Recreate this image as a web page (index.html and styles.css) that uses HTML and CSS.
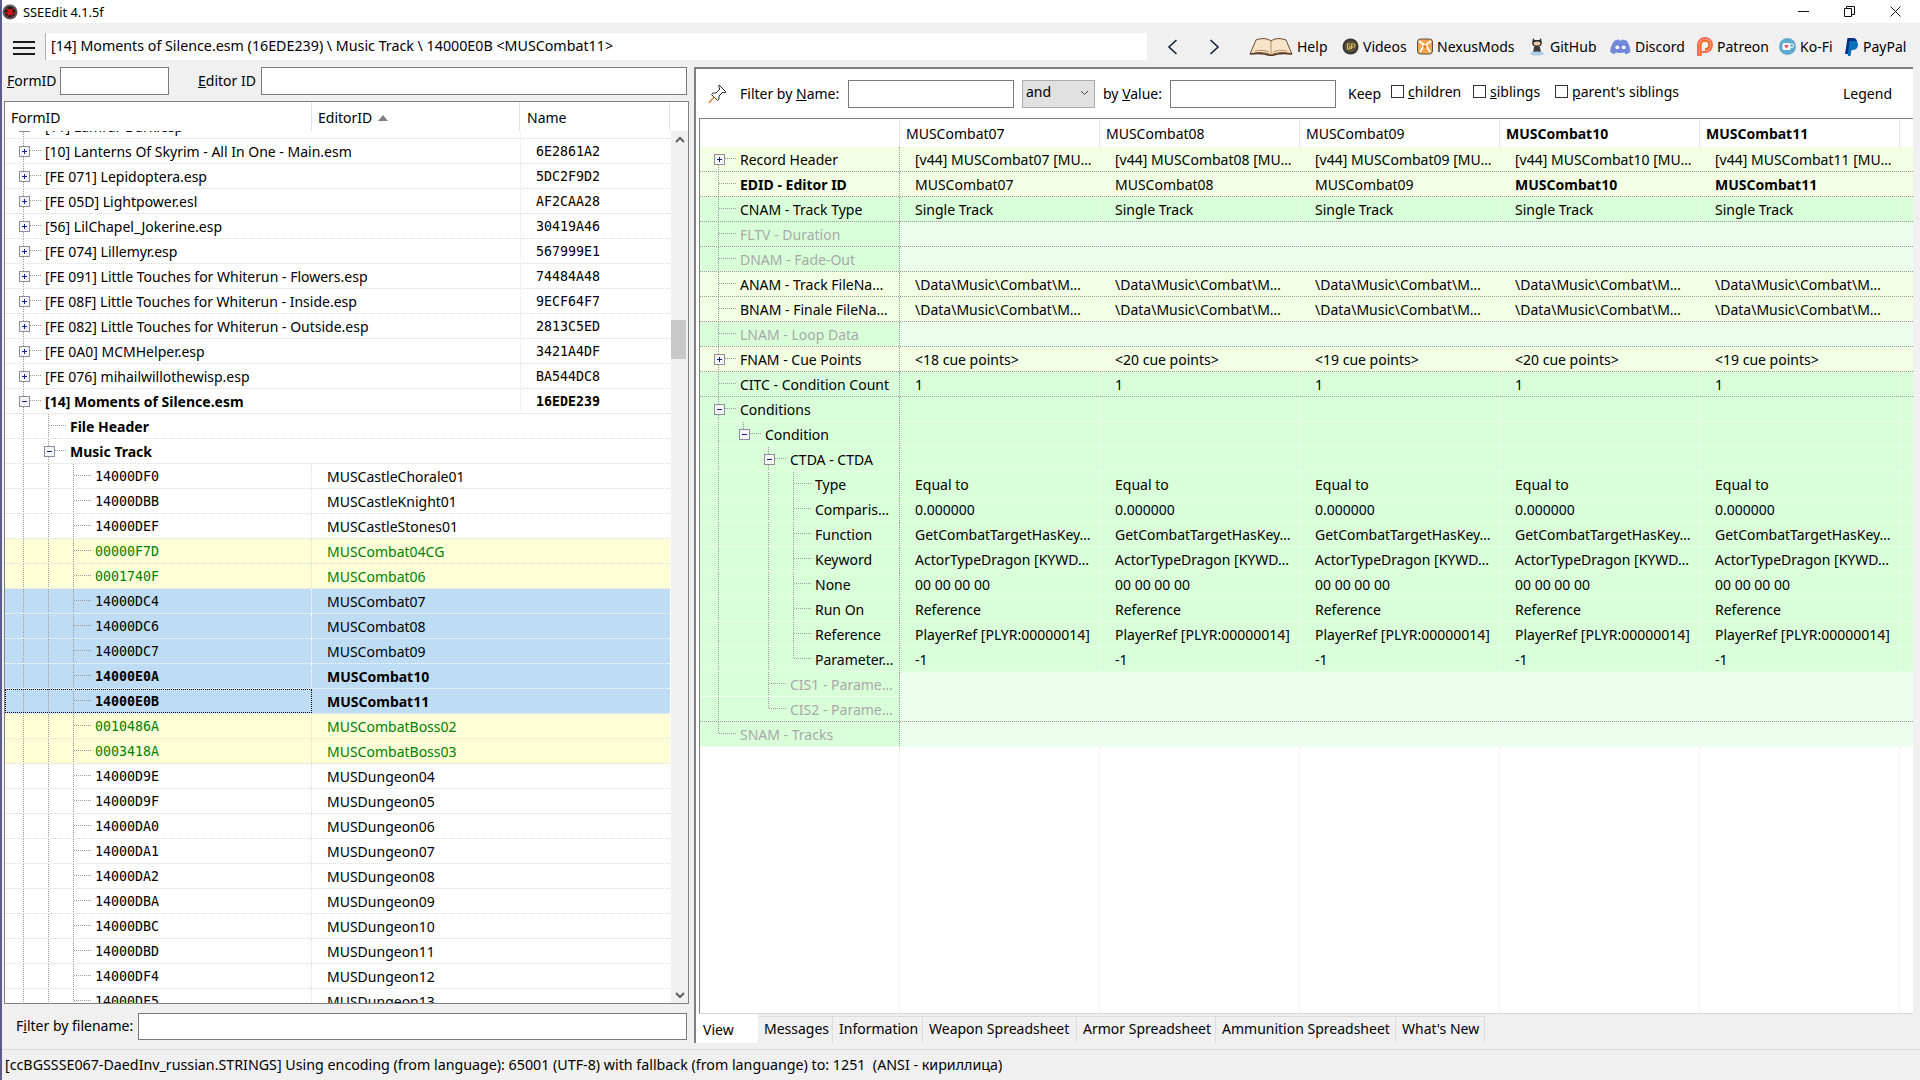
FILE: index.html
```html
<!DOCTYPE html>
<html lang="en">
<head>
<meta charset="utf-8">
<title>SSEEdit 4.1.5f</title>
<link rel="stylesheet" href="styles.css">
</head>
<body>
<div class="app">
  <header class="titlebar">
    <svg class="appicon" viewBox="0 0 16 16" width="16" height="16"><circle cx="8" cy="8" r="7.5" fill="#5c5c5c"/><circle cx="8" cy="8" r="5.5" fill="#1c1c1c"/><path d="M4 4l3 3M12 4L9 7M3 9h3M13 9h-3M5 13l2-3M11 13L9 10" stroke="#d01818" stroke-width="1.3"/><ellipse cx="8" cy="8" rx="2.4" ry="3" fill="#d01818"/></svg>
    <span class="apptitle">SSEEdit 4.1.5f</span>
    <div class="winbtns">
      <svg width="11" height="11" viewBox="0 0 11 11"><path d="M0 5.5h11" stroke="#111"/></svg>
      <svg width="11" height="11" viewBox="0 0 11 11"><path d="M.5 2.5h7v8h-7zM2.5 2.5v-2h8v8h-3" fill="none" stroke="#111"/></svg>
      <svg width="11" height="11" viewBox="0 0 11 11"><path d="M.5.5l10 10M10.5.5l-10 10" stroke="#111"/></svg>
    </div>
  </header>

  <nav class="toolbar">
    <div class="burger"><i></i><i></i><i></i></div>
    <div class="address">[14] Moments of Silence.esm (16EDE239) \ Music Track \ 14000E0B &lt;MUSCombat11&gt;</div>
    <svg class="chev first" width="11" height="16" viewBox="0 0 11 16"><path d="M9.5 1L2 8l7.5 7" fill="none" stroke="#14233c" stroke-width="1.6"/></svg>
    <svg class="chev" width="11" height="16" viewBox="0 0 11 16"><path d="M1.5 1L9 8l-7.5 7" fill="none" stroke="#14233c" stroke-width="1.6"/></svg>
    <div class="links">
      <a class="link book"><svg width="44" height="19" viewBox="0 0 44 19"><path d="M1 17L7 3c5-2 11-2 15 1 4-3 10-3 15-1l6 14c-7-2-15-2-21 1-6-3-14-3-21-1z" fill="#f6e3c8" stroke="#6b4a2c"/><path d="M22 4v13M6 14c5-1 10-1 14 1M38 14c-5-1-10-1-14 1" stroke="#b98d62" fill="none"/><path d="M1 17c7-1 15-1 21 2 6-3 14-3 21-2" stroke="#5a3a20" stroke-width="1.5" fill="none"/></svg>Help</a>
      <a class="link"><svg width="17" height="17" viewBox="0 0 17 17"><circle cx="8.5" cy="8.5" r="8" fill="#3a3530"/><circle cx="8.5" cy="8.5" r="6" fill="#57503f"/><path d="M8 6H5.5v5H8V8.7H6.7M9.5 11V6h2a1.4 1.4 0 010 3h-2" fill="none" stroke="#d9b45a" stroke-width="1.2"/></svg>Videos</a>
      <a class="link"><svg width="16" height="17" viewBox="0 0 16 17"><rect x=".5" y="1" width="15" height="15" rx="3" fill="#f6a34a" stroke="#5b5048"/><path d="M2 3l5 4-1 2-3 5M14 3L9 7l1 2 3 5" stroke="#fff" stroke-width="2" fill="none"/><circle cx="8" cy="8.5" r="1.6" fill="#e27a1f"/></svg>NexusMods</a>
      <a class="link"><svg width="18" height="19" viewBox="0 0 18 19"><path d="M5 1l1.5 2h5L13 1l.7 4c.6 2.800-1.200 5-4.700 5S3.700 7.800 4.300 5z" fill="#2b2b2b"/><ellipse cx="9" cy="6.500" rx="3.400" ry="2" fill="#e9c9a8"/><path d="M6 10h6l.8 5H5.200z" fill="#3c3c3c"/><ellipse cx="9" cy="16.500" rx="7" ry="2" fill="#a9cfe6"/></svg>GitHub</a>
      <a class="link"><svg width="21" height="16" viewBox="0 0 21 16"><path d="M4 2c2-1 4-1.500 5-1.500l.5 1h2l.5-1c1 0 3 .5 5 1.500 2 3 3.500 7 3.300 11-1.500 1.200-3.300 2-4.800 2.300l-1-1.800-4.500.5-4.500-.5-1 1.800C3.500 15 1.700 14.200.2 13 0 9 2 5 4 2z" fill="#7289da"/><circle cx="7.300" cy="8.300" r="1.900" fill="#fff"/><circle cx="13.700" cy="8.300" r="1.900" fill="#fff"/></svg>Discord</a>
      <a class="link"><svg width="16" height="20" viewBox="0 0 16 20"><path d="M1 19V8a7 7 0 117 7H5" fill="none" stroke="#f96854" stroke-width="2"/><path d="M3.500 19V8a4.500 4.500 0 114.500 4.500" fill="none" stroke="#f26b21" stroke-width="2.400"/></svg>Patreon</a>
      <a class="link"><svg width="17" height="17" viewBox="0 0 17 17"><circle cx="8.500" cy="8.500" r="8.500" fill="#5fa9cf"/><rect x="3.500" y="5" width="8" height="7" rx="1.500" fill="#fff"/><path d="M11.500 6h1.500a1.500 1.500 0 010 3.500h-1.500" fill="none" stroke="#fff"/><path d="M7.500 10.500L5.500 8.300a1.100 1.100 0 012-1 1.100 1.100 0 012 1z" fill="#e5566b"/></svg>Ko-Fi</a>
      <a class="link"><svg width="14" height="18" viewBox="0 0 14 18"><path d="M2.500 0h5c3.500 0 5 2 4.300 5C11 8.500 9 10 6 10H4.500l-1 6H0z" fill="#003087"/><path d="M4.500 3h4.500c3 0 4.500 1.500 4 4.500-.6 3-2.500 4.500-5.500 4.500H6.500l-1 6H2.800z" fill="#0a70ba"/></svg>PayPal</a>
    </div>
  </nav>

  <main class="main">
    <section class="left">
      <div class="searchbar">
        <label class="lb-form"><u>F</u>ormID</label><input class="in in-form">
        <label class="lb-ed"><u>E</u>ditor ID</label><input class="in in-ed">
      </div>
      <div class="treebox">
        <div class="thead">
          <span class="th th1">FormID</span>
          <span class="th th2">EditorID<i class="sort"></i></span>
          <span class="th th3">Name</span>
        </div>
        <div class="tbody">
          <div class="tlist">
            <div class="tinner">
              <div class="row"><span class="cf"><i class="x p"></i>[11] Lamrar Dark.esp</span><span class="cn"></span></div>
              <div class="row"><span class="cf"><i class="x p"></i>[10] Lanterns Of Skyrim - All In One - Main.esm</span><span class="cn">6E2861A2</span></div>
              <div class="row"><span class="cf"><i class="x p"></i>[FE 071] Lepidoptera.esp</span><span class="cn">5DC2F9D2</span></div>
              <div class="row"><span class="cf"><i class="x p"></i>[FE 05D] Lightpower.esl</span><span class="cn">AF2CAA28</span></div>
              <div class="row"><span class="cf"><i class="x p"></i>[56] LilChapel_Jokerine.esp</span><span class="cn">30419A46</span></div>
              <div class="row"><span class="cf"><i class="x p"></i>[FE 074] Lillemyr.esp</span><span class="cn">567999E1</span></div>
              <div class="row"><span class="cf"><i class="x p"></i>[FE 091] Little Touches for Whiterun - Flowers.esp</span><span class="cn">74484A48</span></div>
              <div class="row"><span class="cf"><i class="x p"></i>[FE 08F] Little Touches for Whiterun - Inside.esp</span><span class="cn">9ECF64F7</span></div>
              <div class="row"><span class="cf"><i class="x p"></i>[FE 082] Little Touches for Whiterun - Outside.esp</span><span class="cn">2813C5ED</span></div>
              <div class="row"><span class="cf"><i class="x p"></i>[FE 0A0] MCMHelper.esp</span><span class="cn">3421A4DF</span></div>
              <div class="row"><span class="cf"><i class="x p"></i>[FE 076] mihailwillothewisp.esp</span><span class="cn">BA544DC8</span></div>
              <div class="row bold"><span class="cf"><i class="x m"></i>[14] Moments of Silence.esm</span><span class="cn">16EDE239</span></div>
              <div class="row bold"><span class="cf noline"><i class="g"></i><i class="e"></i>File Header</span></div>
              <div class="row bold"><span class="cf noline"><i class="g"></i><i class="x m"></i>Music Track</span></div>
              <div class="row"><span class="cid"><i class="g"></i><i class="g"></i><i class="e"></i>14000DF0</span><span class="ced">MUSCastleChorale01</span></div>
              <div class="row"><span class="cid"><i class="g"></i><i class="g"></i><i class="e"></i>14000DBB</span><span class="ced">MUSCastleKnight01</span></div>
              <div class="row"><span class="cid"><i class="g"></i><i class="g"></i><i class="e"></i>14000DEF</span><span class="ced">MUSCastleStones01</span></div>
              <div class="row ovr"><span class="cid"><i class="g"></i><i class="g"></i><i class="e"></i>00000F7D</span><span class="ced">MUSCombat04CG</span></div>
              <div class="row ovr"><span class="cid"><i class="g"></i><i class="g"></i><i class="e"></i>0001740F</span><span class="ced">MUSCombat06</span></div>
              <div class="row sel"><span class="cid"><i class="g"></i><i class="g"></i><i class="e"></i>14000DC4</span><span class="ced">MUSCombat07</span></div>
              <div class="row sel"><span class="cid"><i class="g"></i><i class="g"></i><i class="e"></i>14000DC6</span><span class="ced">MUSCombat08</span></div>
              <div class="row sel"><span class="cid"><i class="g"></i><i class="g"></i><i class="e"></i>14000DC7</span><span class="ced">MUSCombat09</span></div>
              <div class="row sel bold"><span class="cid"><i class="g"></i><i class="g"></i><i class="e"></i>14000E0A</span><span class="ced">MUSCombat10</span></div>
              <div class="row sel bold focus"><span class="cid"><i class="g"></i><i class="g"></i><i class="e"></i>14000E0B</span><span class="ced">MUSCombat11</span></div>
              <div class="row ovr"><span class="cid"><i class="g"></i><i class="g"></i><i class="e"></i>0010486A</span><span class="ced">MUSCombatBoss02</span></div>
              <div class="row ovr"><span class="cid"><i class="g"></i><i class="g"></i><i class="e"></i>0003418A</span><span class="ced">MUSCombatBoss03</span></div>
              <div class="row"><span class="cid"><i class="g"></i><i class="g"></i><i class="e"></i>14000D9E</span><span class="ced">MUSDungeon04</span></div>
              <div class="row"><span class="cid"><i class="g"></i><i class="g"></i><i class="e"></i>14000D9F</span><span class="ced">MUSDungeon05</span></div>
              <div class="row"><span class="cid"><i class="g"></i><i class="g"></i><i class="e"></i>14000DA0</span><span class="ced">MUSDungeon06</span></div>
              <div class="row"><span class="cid"><i class="g"></i><i class="g"></i><i class="e"></i>14000DA1</span><span class="ced">MUSDungeon07</span></div>
              <div class="row"><span class="cid"><i class="g"></i><i class="g"></i><i class="e"></i>14000DA2</span><span class="ced">MUSDungeon08</span></div>
              <div class="row"><span class="cid"><i class="g"></i><i class="g"></i><i class="e"></i>14000DBA</span><span class="ced">MUSDungeon09</span></div>
              <div class="row"><span class="cid"><i class="g"></i><i class="g"></i><i class="e"></i>14000DBC</span><span class="ced">MUSDungeon10</span></div>
              <div class="row"><span class="cid"><i class="g"></i><i class="g"></i><i class="e"></i>14000DBD</span><span class="ced">MUSDungeon11</span></div>
              <div class="row"><span class="cid"><i class="g"></i><i class="g"></i><i class="e"></i>14000DF4</span><span class="ced">MUSDungeon12</span></div>
              <div class="row"><span class="cid"><i class="g"></i><i class="g"></i><i class="e"></i>14000DF5</span><span class="ced">MUSDungeon13</span></div>
            </div>
          </div>
          <div class="vscroll">
            <svg width="12" height="8" viewBox="0 0 12 8"><path d="M2 6l4-4 4 4" fill="none" stroke="#606060" stroke-width="2"/></svg>
            <div class="track"><div class="thumb"></div></div>
            <svg width="12" height="8" viewBox="0 0 12 8"><path d="M2 2l4 4 4-4" fill="none" stroke="#606060" stroke-width="2"/></svg>
          </div>
        </div>
      </div>
      <div class="filebar">
        <label>F<u>i</u>lter by filename:</label><input class="in in-file">
      </div>
    </section>

    <section class="right">
      <div class="rtop">
        <svg class="pin" width="20" height="20" viewBox="0 0 20 20"><path d="M12 1l7 7-2 1-1-1-4 4 0 3-1.500 1.500-6-6L6 9l3 0 4-4-1-1z" fill="#fff" stroke="#2b2b2b"/><path d="M7 13l-5 6" stroke="#e08a2c" stroke-width="1.600"/></svg>
        <label class="lb-name">Filter by <u>N</u>ame:</label><input class="in in-name">
        <div class="combo">and<svg width="9" height="6" viewBox="0 0 9 6"><path d="M1 1l3.500 3.500L8 1" fill="none" stroke="#444"/></svg></div>
        <label class="lb-val">by <u>V</u>alue:</label><input class="in in-val">
        <span class="keep">Keep</span>
        <label class="ck ck1"><input type="checkbox"><span><u>c</u>hildren</span></label>
        <label class="ck ck2"><input type="checkbox"><span><u>s</u>iblings</span></label>
        <label class="ck ck3"><input type="checkbox"><span><u>p</u>arent's siblings</span></label>
        <span class="legend">Legend</span>
      </div>
      <div class="grid">
        <div class="ghead"><span></span><span>MUSCombat07</span><span>MUSCombat08</span><span>MUSCombat09</span><span class="bo">MUSCombat10</span><span class="bo">MUSCombat11</span></div>
        <div class="grow y"><span class="c0"><i class="x xf p"></i>Record Header</span><span>[v44] MUSCombat07 [MU…</span><span>[v44] MUSCombat08 [MU…</span><span>[v44] MUSCombat09 [MU…</span><span>[v44] MUSCombat10 [MU…</span><span>[v44] MUSCombat11 [MU…</span><span></span></div>
        <div class="grow y"><span class="c0 bo"><i class="e"></i>EDID - Editor ID</span><span>MUSCombat07</span><span>MUSCombat08</span><span>MUSCombat09</span><span class="bo">MUSCombat10</span><span class="bo">MUSCombat11</span><span></span></div>
        <div class="grow gr"><span class="c0"><i class="e"></i>CNAM - Track Type</span><span>Single Track</span><span>Single Track</span><span>Single Track</span><span>Single Track</span><span>Single Track</span><span></span></div>
        <div class="grow em"><span class="c0 off"><i class="e"></i>FLTV - Duration</span><span></span><span></span><span></span><span></span><span></span><span></span></div>
        <div class="grow em"><span class="c0 off"><i class="e"></i>DNAM - Fade-Out</span><span></span><span></span><span></span><span></span><span></span><span></span></div>
        <div class="grow y"><span class="c0"><i class="e"></i>ANAM - Track FileNa…</span><span>\Data\Music\Combat\M…</span><span>\Data\Music\Combat\M…</span><span>\Data\Music\Combat\M…</span><span>\Data\Music\Combat\M…</span><span>\Data\Music\Combat\M…</span><span></span></div>
        <div class="grow y"><span class="c0"><i class="e"></i>BNAM - Finale FileNa…</span><span>\Data\Music\Combat\M…</span><span>\Data\Music\Combat\M…</span><span>\Data\Music\Combat\M…</span><span>\Data\Music\Combat\M…</span><span>\Data\Music\Combat\M…</span><span></span></div>
        <div class="grow em"><span class="c0 off"><i class="e"></i>LNAM - Loop Data</span><span></span><span></span><span></span><span></span><span></span><span></span></div>
        <div class="grow y"><span class="c0"><i class="x p"></i>FNAM - Cue Points</span><span>&lt;18 cue points&gt;</span><span>&lt;20 cue points&gt;</span><span>&lt;19 cue points&gt;</span><span>&lt;20 cue points&gt;</span><span>&lt;19 cue points&gt;</span><span></span></div>
        <div class="grow gr"><span class="c0"><i class="e"></i>CITC - Condition Count</span><span>1</span><span>1</span><span>1</span><span>1</span><span>1</span><span></span></div>
        <div class="grow gr soft"><span class="c0"><i class="x m"></i>Conditions</span><span></span><span></span><span></span><span></span><span></span><span></span></div>
        <div class="grow gr soft"><span class="c0"><i class="g"></i><i class="x xl m"></i>Condition</span><span></span><span></span><span></span><span></span><span></span><span></span></div>
        <div class="grow gr soft"><span class="c0"><i class="g"></i><i class="b"></i><i class="x m"></i>CTDA - CTDA</span><span></span><span></span><span></span><span></span><span></span><span></span></div>
        <div class="grow gr soft"><span class="c0"><i class="g"></i><i class="b"></i><i class="g"></i><i class="e"></i>Type</span><span>Equal to</span><span>Equal to</span><span>Equal to</span><span>Equal to</span><span>Equal to</span><span></span></div>
        <div class="grow gr soft"><span class="c0"><i class="g"></i><i class="b"></i><i class="g"></i><i class="e"></i>Comparis…</span><span>0.000000</span><span>0.000000</span><span>0.000000</span><span>0.000000</span><span>0.000000</span><span></span></div>
        <div class="grow gr soft"><span class="c0"><i class="g"></i><i class="b"></i><i class="g"></i><i class="e"></i>Function</span><span>GetCombatTargetHasKey…</span><span>GetCombatTargetHasKey…</span><span>GetCombatTargetHasKey…</span><span>GetCombatTargetHasKey…</span><span>GetCombatTargetHasKey…</span><span></span></div>
        <div class="grow gr soft"><span class="c0"><i class="g"></i><i class="b"></i><i class="g"></i><i class="e"></i>Keyword</span><span>ActorTypeDragon [KYWD…</span><span>ActorTypeDragon [KYWD…</span><span>ActorTypeDragon [KYWD…</span><span>ActorTypeDragon [KYWD…</span><span>ActorTypeDragon [KYWD…</span><span></span></div>
        <div class="grow gr soft"><span class="c0"><i class="g"></i><i class="b"></i><i class="g"></i><i class="e"></i>None</span><span>00 00 00 00</span><span>00 00 00 00</span><span>00 00 00 00</span><span>00 00 00 00</span><span>00 00 00 00</span><span></span></div>
        <div class="grow gr soft"><span class="c0"><i class="g"></i><i class="b"></i><i class="g"></i><i class="e"></i>Run On</span><span>Reference</span><span>Reference</span><span>Reference</span><span>Reference</span><span>Reference</span><span></span></div>
        <div class="grow gr soft"><span class="c0"><i class="g"></i><i class="b"></i><i class="g"></i><i class="e"></i>Reference</span><span>PlayerRef [PLYR:00000014]</span><span>PlayerRef [PLYR:00000014]</span><span>PlayerRef [PLYR:00000014]</span><span>PlayerRef [PLYR:00000014]</span><span>PlayerRef [PLYR:00000014]</span><span></span></div>
        <div class="grow gr soft"><span class="c0"><i class="g"></i><i class="b"></i><i class="g"></i><i class="e el"></i>Parameter…</span><span>-1</span><span>-1</span><span>-1</span><span>-1</span><span>-1</span><span></span></div>
        <div class="grow em soft"><span class="c0 off"><i class="g"></i><i class="b"></i><i class="e"></i>CIS1 - Parame…</span><span></span><span></span><span></span><span></span><span></span><span></span></div>
        <div class="grow em"><span class="c0 off"><i class="g"></i><i class="b"></i><i class="e el"></i>CIS2 - Parame…</span><span></span><span></span><span></span><span></span><span></span><span></span></div>
        <div class="grow em soft"><span class="c0 off"><i class="e el"></i>SNAM - Tracks</span><span></span><span></span><span></span><span></span><span></span><span></span></div>
        <div class="grow filler"><span></span><span></span><span></span><span></span><span></span><span></span><span></span></div>
      </div>
      <div class="tabs">
        <span class="tab active">View</span><span class="tab">Messages</span><span class="tab">Information</span><span class="tab">Weapon Spreadsheet</span><span class="tab">Armor Spreadsheet</span><span class="tab">Ammunition Spreadsheet</span><span class="tab">What's New</span>
      </div>
    </section>
  </main>

  <footer class="status">[ccBGSSSE067-DaedInv_russian.STRINGS] Using encoding (from language): 65001 (UTF-8) with fallback (from languange) to: 1251&nbsp; (ANSI - кириллица)</footer>
</div>
</body>
</html>
```

FILE: styles.css
```css
* { box-sizing: border-box; }
:root {
  --v: repeating-linear-gradient(#9a9a9a 0 1px, transparent 1px 2px);
  --h: repeating-linear-gradient(90deg, #9a9a9a 0 1px, transparent 1px 2px);
}
html, body { margin: 0; height: 100%; overflow: hidden; }
body {
  font-family: "Noto Sans", "Open Sans", sans-serif;
  font-size: 14px;
  color: #000;
  background: #f0f0f0;
}
.app {
  width: 1920px;
  height: 1080px;
  border-left: 2px solid #5b5b8c;
  display: flex;
  flex-direction: column;
  overflow: hidden;
}
i { font-style: normal; display: block; }
input { margin: 0; font: inherit; }

/* title bar */
.titlebar { height: 23px; flex: none; background: #fff; display: flex; align-items: center; padding-left: 0; }
.appicon { flex: none; }
.apptitle { margin-left: 5px; font-size: 12.8px; padding-top: 1px; }
.winbtns { margin-left: auto; display: flex; gap: 35px; padding-right: 19px; }

/* toolbar */
.toolbar { height: 37px; flex: none; display: flex; align-items: flex-start; padding-top: 10px; }
.burger { width: 22px; margin: 8px 0 0 11px; display: flex; flex-direction: column; gap: 4px; flex: none; }
.burger i { height: 2px; background: #1a1a1a; }
.address {
  width: 1102px; height: 27px; margin-left: 10px; flex: none;
  background: #fff; border-left: 1px solid #b0b0b0;
  padding-left: 5px; line-height: 26px; white-space: nowrap; font-size: 14.25px;
}
.chev { flex: none; margin-top: 6px; margin-left: 31px; }
.chev.first { margin-left: 20px; }
.links {
  display: grid; grid-template-columns: 93px 75px 111px 82px 87px 82px 66px 60px;
  margin-left: 29px; height: 27px; flex: none;
}
.link { display: flex; align-items: center; gap: 4px; white-space: nowrap; }
.link svg { flex: none; }

/* main */
.main { flex: 1; display: flex; min-height: 0; border-bottom: 1px solid #d8d8d8; }
.left { width: 690px; flex: none; display: flex; flex-direction: column; padding: 7px 0 0 2px; }
.in { border: 1px solid #7a7a7a; background: #fff; height: 28px; padding: 0 3px; }
.searchbar { display: flex; align-items: center; height: 28px; flex: none; }
.searchbar label { padding-bottom: 2px; }
.lb-form { margin-left: 3px; width: 53px; }
.in-form { width: 109px; }
.lb-ed { margin-left: 29px; width: 63px; }
.in-ed { width: 426px; }

.treebox {
  margin-top: 6px; height: 903px; width: 685px; flex: none;
  border: 1px solid #808080; background: #fff;
  display: flex; flex-direction: column;
}
.thead { height: 29px; flex: none; display: flex; align-items: center; }
.th { height: 100%; display: flex; align-items: center; padding-top: 2px; border-right: 1px solid #e4e4e4; }
.th1 { width: 307px; padding-left: 6px; }
.th2 { width: 208px; padding-left: 6px; }
.th3 { width: 150px; padding-left: 7px; }
.sort { width: 0; height: 0; margin-left: 6px; border: 5px solid transparent; border-top: 0; border-bottom: 6px solid #808080; }
.tbody { flex: 1; min-height: 0; display: flex; }
.tlist { width: 665px; flex: none; overflow: hidden; }
.tinner { margin-top: -17px; }
.row {
  height: 25px; display: flex;
  border-bottom: 1px dotted #dcdcdc;
  white-space: nowrap;
}
.row > span { display: flex; align-items: center; }
.cf { width: 516px; flex: none; border-right: 1px dotted #e6e6e6; }
.cf.noline { border-right: 0; }
.cn { width: 149px; flex: none; padding-left: 15px; font-family: "DejaVu Sans Mono", monospace; font-size: 13.3px; }
.cid { width: 307px; flex: none; border-right: 1px dotted #e0e0e0; font-family: "DejaVu Sans Mono", monospace; font-size: 13.3px; }
.ced { flex: 1; padding-left: 15px; }
.bold { font-weight: 700; }
.ovr { background: #ffffd7; color: #008000; }
.sel { background: #bfdcf5; border-bottom-color: #fff; }
.sel .cid { border-right-color: #fff; }
.focus .cid { outline: 1px dotted #000; outline-offset: -1px; }

/* tree guides */
.g, .e, .x, .b { flex: none; align-self: stretch; }
.g, .b { width: 25px; }
.e, .x { width: 40px; position: relative; }
.g { background: var(--v) 18px 0 / 1px 100% no-repeat; }
.e, .x { background: var(--v) 18px 0 / 1px 100% no-repeat, var(--h) 19px 11px / 17px 1px no-repeat; }
.e.el { background: var(--v) 18px 0 / 1px 12px no-repeat, var(--h) 19px 11px / 17px 1px no-repeat; }
.x.xf { background: var(--v) 18px 12px / 1px 12px no-repeat, var(--h) 19px 11px / 17px 1px no-repeat; }
.x.xl { background: var(--v) 18px 0 / 1px 12px no-repeat, var(--h) 19px 11px / 17px 1px no-repeat; }
.x::before {
  content: ""; position: absolute; left: 14px; top: 7px; width: 9px; height: 9px;
  border: 1px solid #8d8d9d; background-color: #f4f4f4;
}
.x.m::before { background-image: linear-gradient(#102090, #102090); background-size: 5px 1px; background-position: center; background-repeat: no-repeat; }
.x.p::before {
  background-image: linear-gradient(#102090, #102090), linear-gradient(#102090, #102090);
  background-size: 5px 1px, 1px 5px; background-position: center; background-repeat: no-repeat;
}

/* scrollbar */
.vscroll { width: 17px; margin-left: 1px; flex: none; background: #f0f0f0; display: flex; flex-direction: column; align-items: center; padding: 5px 0 4px; }
.vscroll svg { flex: none; }
.track { flex: 1; width: 100%; padding-top: 176px; }
.thumb { width: 15px; height: 39px; background: #c8c8c8; margin-right: 2px; }

.filebar { display: flex; align-items: center; margin-top: 9px; padding-left: 12px; }
.filebar label { width: 122px; flex: none; padding-bottom: 2px; }
.in-file { width: 549px; height: 27px; }

/* right panel */
.right {
  width: 1219px; margin: 7px 0 6px 2px; flex: none;
  border-left: 2px solid #808080; border-top: 2px solid #808080;
  background: #fff; display: flex; flex-direction: column;
}
.rtop { height: 49px; flex: none; display: flex; align-items: center; }
.pin { margin-left: 11px; flex: none; }
.lb-name { margin-left: 13px; width: 108px; }
.in-name { width: 166px; }
.combo {
  width: 73px; height: 28px; margin-left: 8px; flex: none;
  background: #e1e1e1; border: 1px solid #adadad;
  display: flex; align-items: center; justify-content: space-between;
  padding: 0 5px 5px 3px;
}
.combo svg { margin-top: 4px; }
.lb-val { margin-left: 8px; width: 67px; }
.in-val { width: 166px; }
.keep { margin-left: 12px; width: 43px; }
.ck { display: flex; align-items: center; gap: 4px; margin-top: -4px; }
.ck input { appearance: none; width: 13px; height: 13px; border: 1px solid #333; background: #fff; }
.ck1 { width: 82px; }
.ck2 { width: 82px; }
.ck3 { width: 288px; }
.legend { flex: none; padding-bottom: 1px; }

.grid { flex: 1; min-height: 0; display: flex; flex-direction: column; margin-left: 3px; border-left: 1px solid #808080; border-top: 1px solid #808080; border-bottom: 1px solid #d8d8d8; }
.ghead { height: 28px; flex: none; display: grid; grid-template-columns: repeat(6, 200px) 10px; }
.ghead span { display: flex; align-items: center; padding-left: 6px; border-right: 1px solid #e4e4e4; }
.bo { font-weight: 700; }
.grow { height: 25px; flex: none; display: grid; grid-template-columns: repeat(6, 200px) 10px; border-bottom: 1px dotted #9a9a9a; white-space: nowrap; }
.grow.soft { border-bottom-color: #f2fff2; }
.grow > span { display: flex; align-items: center; padding-left: 15px; border-right: 1px dotted #f4fff4; }
.grow > span.c0 { padding-left: 0; border-right-color: #9a9a9a; }
.grow > span:last-child { border-right: 0; }
.y { background: #f3ffe3; }
.gr { background: #d9ffd9; }
.em { background: #ecffec; }
.em .c0 { background: #d9ffd9; }
.off { color: #a8a8a8; }
.filler { flex: 1; height: auto; border-bottom: 0; }
.filler > span { border-right-color: #e8e8e8; }

.tabs {
  height: 29px; flex: none; display: grid; align-items: stretch; background: #f0f0f0;
  grid-template-columns: 62px 75px 90px 154px 139px 180px 89px; justify-content: start;
}
.tab { display: flex; align-items: center; padding: 0 0 3px 6px; margin-top: 2px; border-right: 1px solid #dcdcdc; border-top: 1px solid #dcdcdc; white-space: nowrap; }
.tab.active { background: #fff; border: 0; margin-top: 0; padding: 2px 0 0 7px; }

.status { height: 30px; flex: none; padding: 0 0 2px 3px; display: flex; align-items: center; white-space: nowrap; font-size: 14.25px; }
```
